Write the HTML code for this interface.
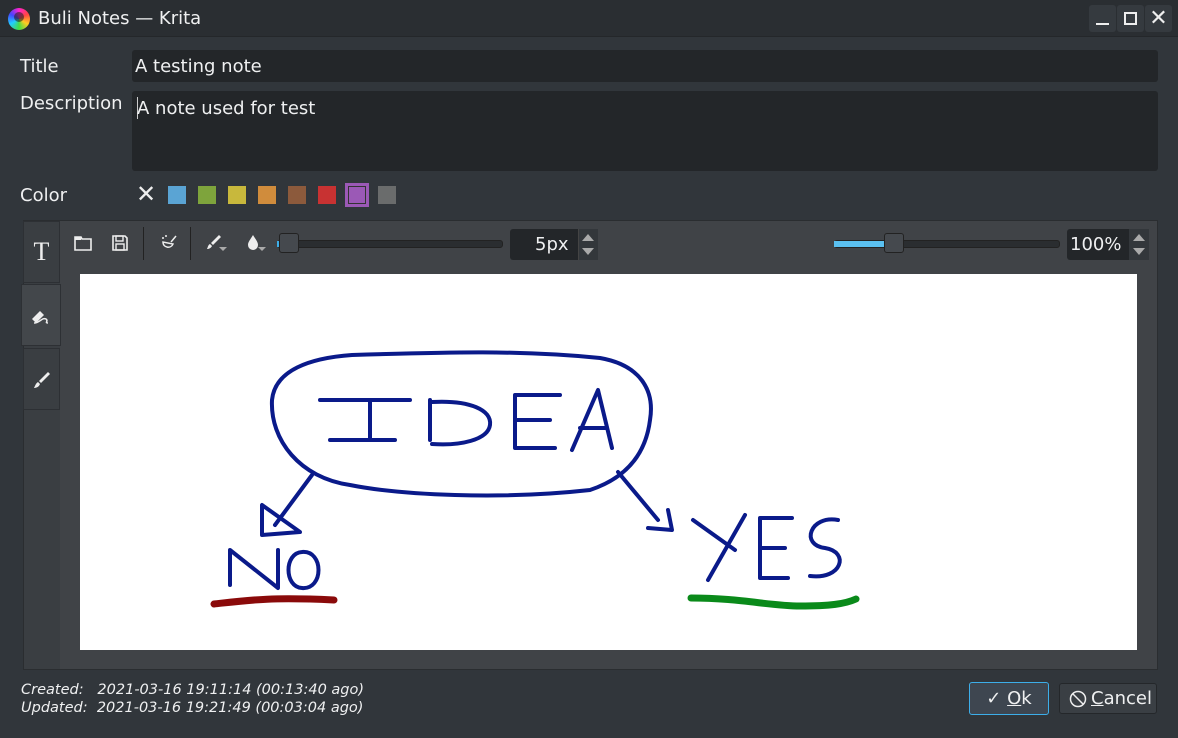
<!DOCTYPE html>
<html><head><meta charset="utf-8"><style>
*{margin:0;padding:0;box-sizing:border-box}
body{width:1178px;height:738px;background:#31363b;font-family:"DejaVu Sans","Liberation Sans",sans-serif;color:#eff0f1;position:relative;overflow:hidden;font-size:18px}
.abs{position:absolute}
.tb{left:0;top:0;width:1178px;height:37px;background:#2a2e32;border-bottom:1px solid #24272a}
.wbtn{top:5px;width:27px;height:27px;background:#353a3f;border-radius:3px}
.lbl{left:20px;font-size:18px;color:#eff0f1}
.inp{background:#232629;border-radius:3px}
.sw{top:186px;width:18px;height:18px}
</style></head><body>
<div class="abs tb"></div>
<div class="abs" style="left:8px;top:8px;width:22px;height:22px;border-radius:50%;background:conic-gradient(#f2c,#f44,#fc2,#4d4,#2cf,#44f,#f2c)"></div>
<div class="abs" style="left:14px;top:12px;width:10px;height:10px;border-radius:50%;background:#222;opacity:.6"></div>
<div class="abs" style="left:38px;top:8px;font-size:18px">Buli Notes — Krita</div>
<div class="abs wbtn" style="left:1089px"><div class="abs" style="left:7px;top:18px;width:13px;height:2px;background:#eee"></div></div>
<div class="abs wbtn" style="left:1117px"><div class="abs" style="left:7px;top:7px;width:13px;height:13px;border:2px solid #eee"></div></div>
<div class="abs wbtn" style="left:1145px;color:#eee;font-size:22px;text-align:center;line-height:27px">✕</div>

<div class="abs lbl" style="top:56px">Title</div>
<div class="abs inp" style="left:132px;top:50px;width:1026px;height:32px"><span class="abs" style="left:3px;top:6px">A testing note</span></div>
<div class="abs lbl" style="top:93px">Description</div>
<div class="abs inp" style="left:132px;top:91px;width:1026px;height:80px"><div class="abs" style="left:5px;top:6px;width:1px;height:22px;background:#ccc"></div><span class="abs" style="left:5px;top:7px">A note used for test</span></div>
<div class="abs lbl" style="top:185px">Color</div>
<div class="abs" style="left:136px;top:180px;font-size:24px;color:#eee">✕</div>
<div class="abs sw" style="left:168px;background:#5aa4d4"></div>
<div class="abs sw" style="left:198px;background:#7ea43c"></div>
<div class="abs sw" style="left:228px;background:#c8b83c"></div>
<div class="abs sw" style="left:258px;background:#d08c3c"></div>
<div class="abs sw" style="left:288px;background:#8c5a3c"></div>
<div class="abs sw" style="left:318px;background:#c83232"></div>
<div class="abs" style="left:345px;top:183px;width:24px;height:24px;background:#9b59b6;padding:3px"><div style="width:18px;height:18px;border:1px solid #333;background:#9b59b6"></div></div>
<div class="abs sw" style="left:378px;background:#6a6c6c"></div>

<div class="abs" style="left:23px;top:220px;width:1135px;height:450px;border:1px solid #2a2d30;background:#3a3e42"></div>
<div class="abs" style="left:60px;top:221px;width:1097px;height:448px;background:#404347"></div>
<div class="abs" style="left:23px;top:221px;width:37px;height:62px;background:#3a3e42;border:1px solid #2d3034;color:#eee;font-family:'Liberation Serif',serif;font-size:26px;text-align:center;line-height:60px">T</div>
<div class="abs" style="left:21px;top:284px;width:40px;height:62px;background:#43474b;border:1px solid #2d3034"></div>
<svg class="abs" style="left:30px;top:305px" width="22" height="22" viewBox="0 0 22 22"><path d="M2 14 L10 6 L14 10 L6 18 Z" fill="#eee"/><path d="M4 18 C10 18 12 12 16 14 C19 16 14 18 18 18" stroke="#eee" fill="none" stroke-width="1.5"/></svg>
<div class="abs" style="left:23px;top:348px;width:37px;height:62px;background:#3a3e42;border:1px solid #2d3034"></div>
<svg class="abs" style="left:32px;top:370px" width="20" height="20" viewBox="0 0 20 20"><path d="M16 2 L18 4 L9 13 L7 11 Z" fill="#eee"/><path d="M6 12 L8 14 C7 17 4 18 2 18 C3 16 4 13 6 12Z" fill="#eee"/></svg>

<svg class="abs" style="left:74px;top:234px" width="18" height="18"><path d="M1 3 H7 L8 5 H17 V16 H1 Z" fill="none" stroke="#eee" stroke-width="1.6"/><rect x="1" y="3" width="6" height="3" fill="#eee"/></svg>
<svg class="abs" style="left:111px;top:234px" width="18" height="18"><path d="M2 2 H14 L16 4 V16 H2 Z" fill="none" stroke="#eee" stroke-width="1.6"/><rect x="5" y="2" width="7" height="5" fill="none" stroke="#eee" stroke-width="1.4"/><rect x="5" y="10" width="8" height="6" fill="none" stroke="#eee" stroke-width="1.4"/></svg>
<div class="abs" style="left:143px;top:227px;width:1px;height:33px;background:#222"></div>
<svg class="abs" style="left:159px;top:232px" width="20" height="20"><path d="M4 10 C4 16 12 17 14 12 Z" fill="none" stroke="#eee" stroke-width="1.5"/><path d="M12 10 L17 4" stroke="#eee" stroke-width="1.5"/><circle cx="4" cy="6" r="1" fill="#eee"/><circle cx="7" cy="4" r="1" fill="#eee"/></svg>
<div class="abs" style="left:190px;top:227px;width:1px;height:33px;background:#222"></div>
<svg class="abs" style="left:205px;top:232px" width="26" height="22"><path d="M14 3 L16 5 L8 13 L6 11Z" fill="#eee"/><path d="M5 12 L7 14 C6 16 4 17 2 17 C3 15 3 13 5 12Z" fill="#eee"/><path d="M14 15 H22 L18 19Z" fill="#aaa"/></svg>
<svg class="abs" style="left:244px;top:232px" width="26" height="22"><path d="M9 3 C12 8 14 10 14 13 A5 5 0 0 1 4 13 C4 10 6 8 9 3Z" fill="#eee"/><path d="M14 15 H22 L18 19Z" fill="#aaa"/></svg>
<div class="abs" style="left:277px;top:240px;width:226px;height:8px;background:#2a2d30;border-radius:3px;border:1px solid #222"></div>
<div class="abs" style="left:277px;top:241px;width:4px;height:6px;background:#3daee9"></div>
<div class="abs" style="left:279px;top:233px;width:20px;height:20px;background:#45494e;border:1px solid #222;border-radius:3px"></div>
<div class="abs" style="left:510px;top:229px;width:88px;height:31px;background:#232629;border-radius:3px"><span class="abs" style="left:25px;top:5px">5px</span><div class="abs" style="left:68px;top:0;width:20px;height:31px;background:#33373b;border-left:1px solid #444"></div><div class="abs" style="left:72px;top:5px;border:6px solid transparent;border-bottom:7px solid #aaa;border-top:0"></div><div class="abs" style="left:72px;top:19px;border:6px solid transparent;border-top:7px solid #aaa;border-bottom:0"></div></div>
<div class="abs" style="left:834px;top:240px;width:226px;height:8px;background:#2a2d30;border-radius:3px;border:1px solid #222"></div>
<div class="abs" style="left:834px;top:241px;width:52px;height:6px;background:#5ac0f0"></div>
<div class="abs" style="left:884px;top:233px;width:20px;height:20px;background:#45494e;border:1px solid #222;border-radius:3px"></div>
<div class="abs" style="left:1067px;top:229px;width:82px;height:31px;background:#232629;border-radius:3px"><span class="abs" style="left:3px;top:5px">100%</span><div class="abs" style="left:62px;top:0;width:20px;height:31px;background:#33373b"></div><div class="abs" style="left:66px;top:5px;border:6px solid transparent;border-bottom:7px solid #aaa;border-top:0"></div><div class="abs" style="left:66px;top:19px;border:6px solid transparent;border-top:7px solid #aaa;border-bottom:0"></div></div>

<svg class="abs" style="left:80px;top:274px" width="1057" height="376" viewBox="80 274 1057 376">
<rect x="80" y="274" width="1057" height="376" fill="#fff"/>
<g fill="none" stroke="#0a1a8a" stroke-width="4" stroke-linecap="round" stroke-linejoin="round">
<path d="M352 355 C450 352 520 350 600 358 C640 365 655 390 650 420 C645 460 620 480 590 490 C500 500 400 495 350 485 C300 478 270 440 272 400 C275 370 310 358 352 355 Z"/>
<path d="M320 400 H410 M370 402 V438 M330 440 H395"/>
<path d="M430 400 V440 M432 402 C470 400 492 410 490 425 C488 440 460 446 432 444"/>
<path d="M515 395 H560 M515 395 V448 M515 420 H550 M515 448 H555"/>
<path d="M572 450 L598 390 L612 448 M580 428 H605"/>
<path d="M312 475 L275 525 M262 505 L262 535 L300 532 Z"/>
<path d="M618 472 L658 520 M648 528 L672 530 L668 510"/>
<path d="M230 585 V550 L278 588 L278 550"/>
<path d="M302 552 C324 550 324 590 302 588 C284 587 284 553 302 552 Z"/>
<path d="M693 520 L735 550 M745 515 L708 580"/>
<path d="M792 518 H760 V578 H788 M760 548 H785"/>
<path d="M838 520 C810 515 800 545 825 548 C850 552 842 580 810 576"/>
</g>
<path d="M214 604 C250 600 270 597 334 600" stroke="#8a0a0a" stroke-width="7" fill="none" stroke-linecap="round"/>
<path d="M691 598 C740 598 770 606 800 606 C830 606 845 604 856 599" stroke="#0a8a1a" stroke-width="7" fill="none" stroke-linecap="round"/>
</svg>

<div class="abs" style="left:21px;top:681px;font-size:14.5px;font-style:italic;line-height:18px;color:#eff0f1">Created:&nbsp;&nbsp;&nbsp;2021-03-16 19:11:14 (00:13:40 ago)<br>Updated:&nbsp;&nbsp;2021-03-16 19:21:49 (00:03:04 ago)</div>
<div class="abs" style="left:969px;top:682px;width:80px;height:33px;background:#3e4650;border:1px solid #3daee9;border-radius:3px;text-align:center;line-height:31px">✓ <u>O</u>k</div>
<div class="abs" style="left:1059px;top:683px;width:98px;height:31px;background:#3a3f44;border:1px solid #24272a;border-radius:3px;line-height:29px"><svg class="abs" style="left:9px;top:6px" width="18" height="18"><circle cx="9" cy="9" r="7.5" fill="none" stroke="#eee" stroke-width="1.5"/><path d="M4 4 L14 14" stroke="#eee" stroke-width="1.5"/></svg><span class="abs" style="left:31px;top:0"><u>C</u>ancel</span></div>
</body></html>
